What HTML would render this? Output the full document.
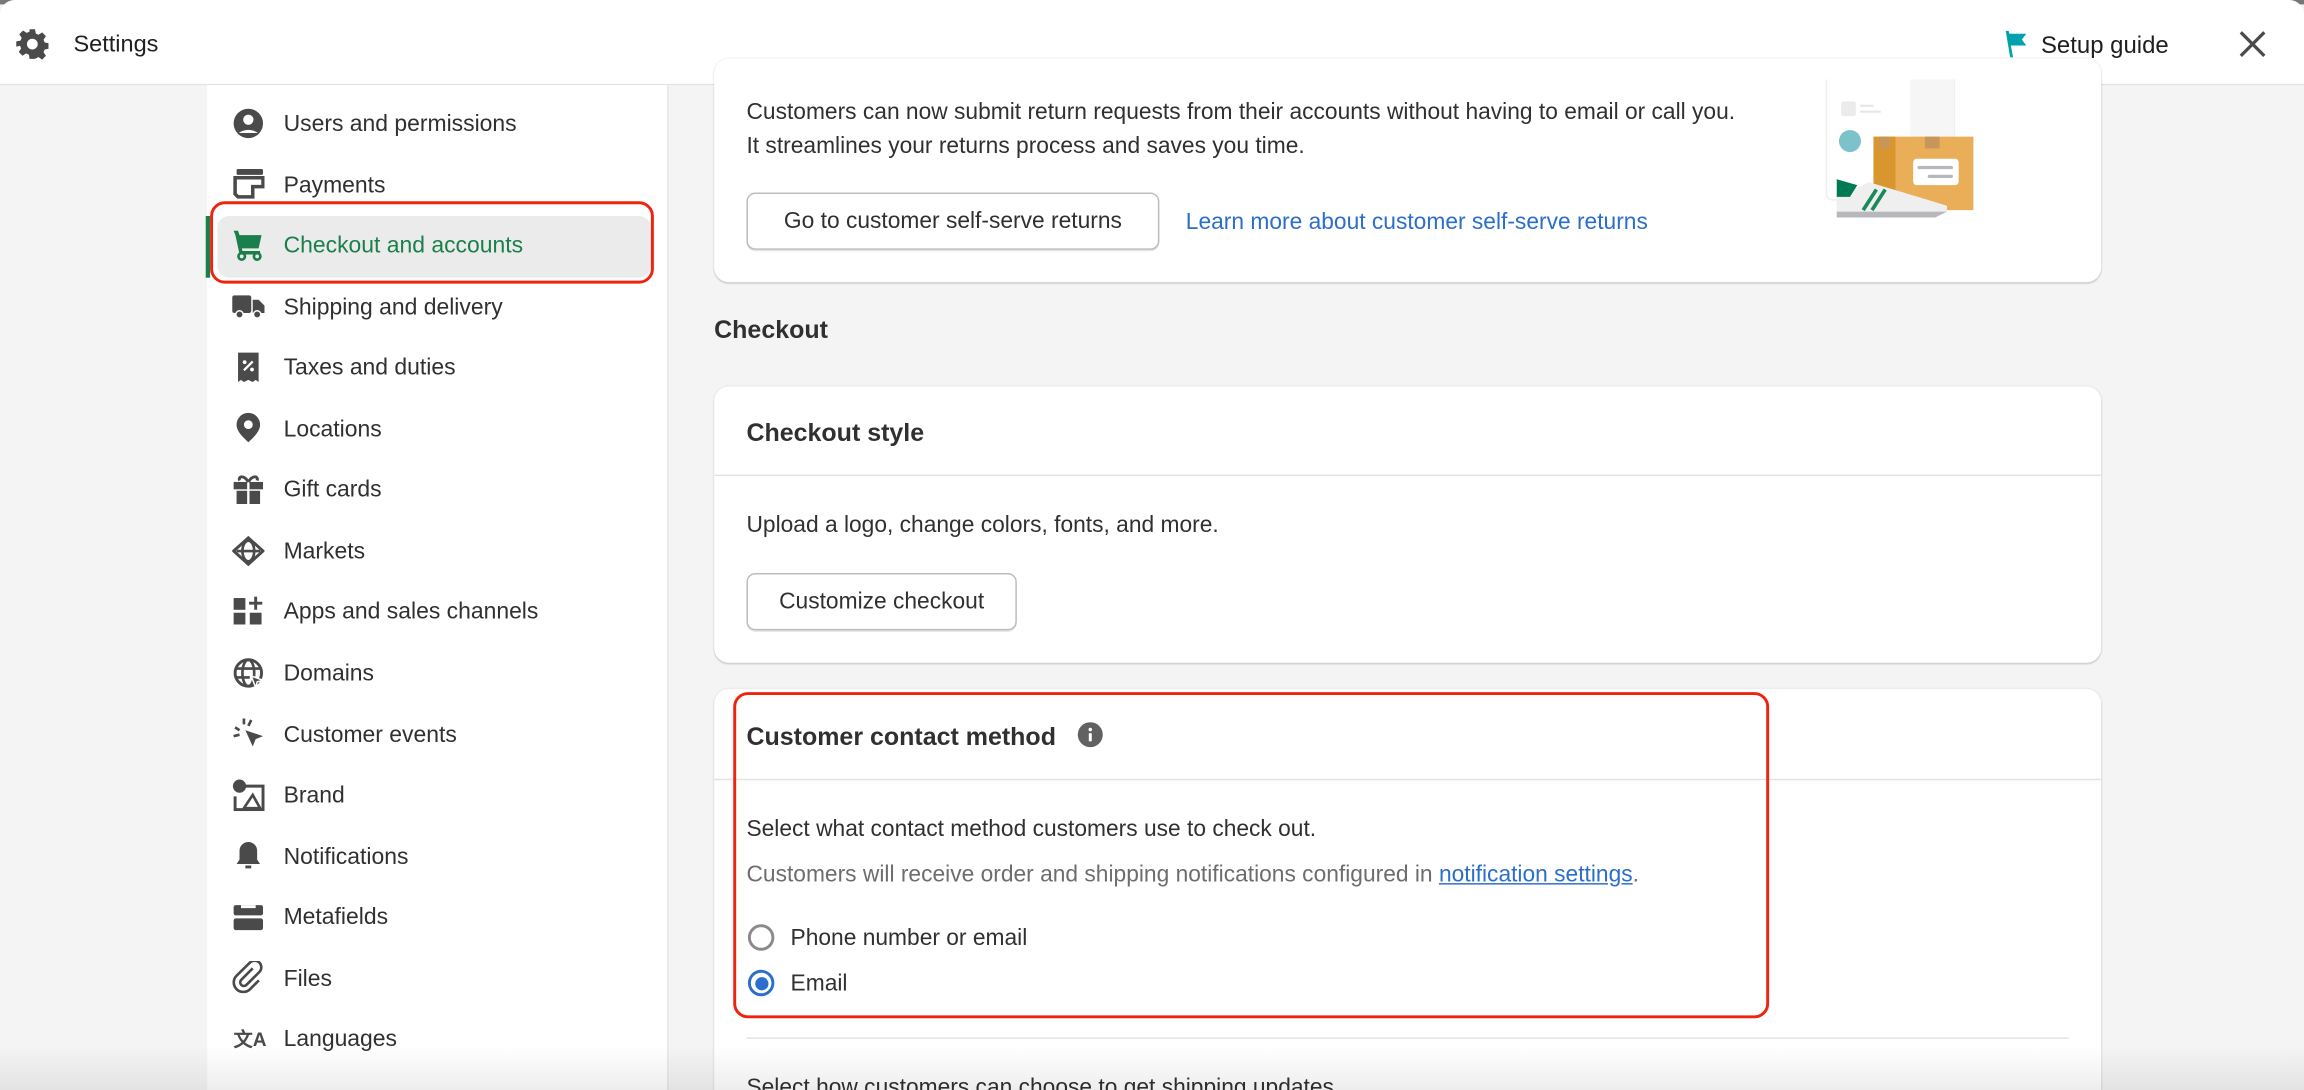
<!DOCTYPE html>
<html><head><meta charset="utf-8"><style>
*{box-sizing:border-box;margin:0;padding:0}
html,body{width:2304px;height:1090px;overflow:hidden;background:#f4f4f4}
#w{position:absolute;left:0;top:0;width:1568px;height:742px;transform:scale(1.469388);transform-origin:0 0;font-family:"Liberation Sans",sans-serif;color:#303030;background:#f4f4f4;overflow:hidden}
.a{position:absolute}
.hdr{left:0;top:0;width:1568px;height:58px;background:#fff;border-bottom:1.5px solid #e3e3e3;border-radius:10px 10px 0 0}
.side{left:141px;top:58px;width:314px;height:700px;background:#fff;border-right:1px solid #e6e6e6}
.it{position:absolute;left:193px;font-size:15.6px;color:#303030;line-height:18px;margin-top:1px}
.ic{position:absolute;left:158px;width:22px;height:22px}
.card{background:#fff;border-radius:10px;box-shadow:0 1px 1px rgba(0,0,0,.12),0 0 0 1px rgba(0,0,0,.03)}
.t{font-size:15.5px;line-height:18px;position:absolute;margin-top:1px}
.btn{position:absolute;border:1px solid #bcbcbc;border-radius:6px;background:#fff;font-size:15.5px;line-height:38px;text-align:center;color:#303030;box-shadow:0 1px 0 rgba(0,0,0,.1)}
.h2{font-size:17px;font-weight:bold;position:absolute;color:#303030;margin-top:1px}
</style></head><body><div id="w">
<div class="a" style="left:0;top:0;width:1568px;height:3px;background:#777"></div>
<div class="a hdr"></div>
<svg class="a" style="left:11px;top:19px" width="22" height="22" viewBox="0 0 24 24"><path fill="#4a4a4a" d="M10 1h4l.6 3.2 2 .9 2.7-1.8 2.8 2.8-1.8 2.7.9 2 3.2.6v4l-3.2.6-.9 2 1.8 2.7-2.8 2.8-2.7-1.8-2 .9L14 23h-4l-.6-3.2-2-.9-2.7 1.8-2.8-2.8 1.8-2.7-.9-2L0 14v-4l3.2-.6.9-2-1.8-2.7 2.8-2.8 2.7 1.8 2-.9zM12 8a4 4 0 100 8 4 4 0 000-8z"/></svg>
<div class="a" style="left:50px;top:22px;font-size:16px;color:#1f1f1f">Settings</div>
<svg class="a" style="left:1364px;top:20px" width="18" height="20" viewBox="0 0 18 20"><path fill="#00a3ad" d="M1 1h2l.5 2H15l-3 4 3 4H4.5L6 19H4z"/></svg>
<div class="a" style="left:1389px;top:22px;font-size:16.3px;color:#1f1f1f">Setup guide</div>
<svg class="a" style="left:1523px;top:20px" width="20" height="20" viewBox="0 0 20 20"><path d="M2 2l16 16M18 2L2 18" stroke="#4a4a4a" stroke-width="2.2"/></svg>

<div class="a side"></div>
<div class="a" style="left:148px;top:147px;width:295px;height:42px;background:#ebebeb;border-radius:8px"></div>
<div class="a" style="left:140px;top:147px;width:3px;height:42px;background:#1a7f4b"></div>
<div class="a" style="left:143px;top:137px;width:302px;height:56px;border:2.5px solid #f0230f;border-radius:10px"></div>

<svg class="ic" style="top:73px" viewBox="0 0 22 22"><circle cx="11" cy="11" r="10" fill="#4a4a4a"/><circle cx="11" cy="8.5" r="3.5" fill="#fff"/><path d="M4.5 17.5a8 5 0 0113 0" fill="#fff"/></svg>
<div class="it" style="top:75px">Users and permissions</div>
<svg class="ic" style="top:114px" viewBox="0 0 22 22"><rect x="3" y="1" width="18" height="4" rx="1" fill="#4a4a4a"/><path d="M2 7h19v6h-7v7H4l-2-2z" fill="none" stroke="#4a4a4a" stroke-width="2.4"/></svg>
<div class="it" style="top:117px">Payments</div>
<svg class="ic" style="top:156px" viewBox="0 0 22 22"><path d="M1 1h3l1 3h15l-2 9H6z" fill="#1a7f4b"/><path d="M3 2l3 14h13" fill="none" stroke="#1a7f4b" stroke-width="2.4"/><circle cx="6.5" cy="18.5" r="2.2" fill="none" stroke="#1a7f4b" stroke-width="1.8"/><circle cx="17" cy="18.5" r="2.2" fill="none" stroke="#1a7f4b" stroke-width="1.8"/></svg>
<div class="it" style="top:158px;color:#1a7f4b">Checkout and accounts</div>
<svg class="ic" style="top:197px" viewBox="0 0 22 22"><rect x="0" y="4" width="13" height="12" rx="1.5" fill="#4a4a4a"/><path d="M14 7h4l4 4v5h-8z" fill="#4a4a4a"/><circle cx="5" cy="17" r="2.5" fill="#4a4a4a" stroke="#fff"/><circle cx="17" cy="17" r="2.5" fill="#4a4a4a" stroke="#fff"/></svg>
<div class="it" style="top:200px">Shipping and delivery</div>
<svg class="ic" style="top:239px" viewBox="0 0 22 22"><path d="M4 1h14v20l-2-1.5-2 1.5-3-1.5L8 21l-2-1.5L4 21z" fill="#4a4a4a"/><path d="M8 13l6-6" stroke="#fff" stroke-width="1.6"/><circle cx="8.5" cy="7.5" r="1.3" fill="#fff"/><circle cx="13.5" cy="12.5" r="1.3" fill="#fff"/></svg>
<div class="it" style="top:241px">Taxes and duties</div>
<svg class="ic" style="top:280px" viewBox="0 0 22 22"><path d="M11 1a8 8 0 018 8c0 5-5 9-8 12-3-3-8-7-8-12a8 8 0 018-8z" fill="#4a4a4a"/><circle cx="11" cy="9" r="3" fill="#fff"/></svg>
<div class="it" style="top:283px">Locations</div>
<svg class="ic" style="top:322px" viewBox="0 0 22 22"><rect x="1" y="6" width="20" height="5" fill="#4a4a4a"/><rect x="3" y="12" width="16" height="9" fill="#4a4a4a"/><path d="M11 6v15" stroke="#fff" stroke-width="1.6"/><path d="M11 6C8 1 4 2 5 5M11 6c3-5 7-4 6-1" fill="none" stroke="#4a4a4a" stroke-width="2"/></svg>
<div class="it" style="top:324px">Gift cards</div>
<svg class="ic" style="top:364px" viewBox="0 0 22 22"><path d="M1 11L11 2l10 9-10 9z" fill="none" stroke="#4a4a4a" stroke-width="2"/><ellipse cx="11" cy="11" rx="4" ry="7" fill="none" stroke="#4a4a4a" stroke-width="1.8"/><path d="M3 11h16" stroke="#4a4a4a" stroke-width="1.8"/></svg>
<div class="it" style="top:366px">Markets</div>
<svg class="ic" style="top:405px" viewBox="0 0 22 22"><rect x="1" y="2" width="8" height="8" fill="#4a4a4a"/><rect x="1" y="12" width="8" height="8" fill="#4a4a4a"/><rect x="12" y="12" width="8" height="8" fill="#4a4a4a"/><path d="M16 1v9M11.5 5.5h9" stroke="#4a4a4a" stroke-width="2"/></svg>
<div class="it" style="top:407px">Apps and sales channels</div>
<svg class="ic" style="top:447px" viewBox="0 0 22 22"><circle cx="11" cy="11" r="9" fill="none" stroke="#4a4a4a" stroke-width="2"/><ellipse cx="11" cy="11" rx="4" ry="9" fill="none" stroke="#4a4a4a" stroke-width="1.8"/><path d="M2 8h18M2 14h10" stroke="#4a4a4a" stroke-width="1.8"/><path d="M13 13l8 3-4 1-1 4z" fill="#4a4a4a" stroke="#fff"/></svg>
<div class="it" style="top:449px">Domains</div>
<svg class="ic" style="top:488px" viewBox="0 0 22 22"><path d="M9 9l12 4-5 2-2 5z" fill="#4a4a4a"/><path d="M8 1v4M2 7l3 2M1 13l4-1M13 2l-2 4" stroke="#4a4a4a" stroke-width="1.8"/></svg>
<div class="it" style="top:491px">Customer events</div>
<svg class="ic" style="top:530px" viewBox="0 0 22 22"><path d="M8 5h13v16H2v-9" fill="none" stroke="#4a4a4a" stroke-width="2"/><circle cx="5" cy="5" r="4.5" fill="#4a4a4a"/><path d="M8 20l6-9 5 9z" fill="none" stroke="#4a4a4a" stroke-width="1.8"/></svg>
<div class="it" style="top:532px">Brand</div>
<svg class="ic" style="top:571px" viewBox="0 0 22 22"><path d="M11 2a6 6 0 016 6v6l2 3H3l2-3V8a6 6 0 016-6z" fill="#4a4a4a"/><path d="M9 19h4" stroke="#4a4a4a" stroke-width="2"/></svg>
<div class="it" style="top:574px">Notifications</div>
<svg class="ic" style="top:613px" viewBox="0 0 22 22"><rect x="1" y="3" width="20" height="7" rx="1.5" fill="#4a4a4a"/><rect x="1" y="12" width="20" height="8" rx="1.5" fill="#4a4a4a"/><path d="M6 3h10v2H6z" fill="#fff"/></svg>
<div class="it" style="top:615px">Metafields</div>
<svg class="ic" style="top:654px" viewBox="0 0 22 22"><path d="M14 5l-8 8a2.5 2.5 0 003.5 3.5l9-9a4.5 4.5 0 00-6.4-6.4L3 10a6.5 6.5 0 009.2 9.2l6-6" fill="none" stroke="#4a4a4a" stroke-width="1.8"/></svg>
<div class="it" style="top:657px">Files</div>
<div class="it" style="left:159px;top:698px;font-size:13px;font-weight:bold;color:#4a4a4a">文A</div>
<div class="it" style="top:698px">Languages</div>

<div class="a card" style="left:486px;top:40px;width:944px;height:152px"></div>
<div class="t" style="left:508px;top:67px;color:#303030">Customers can now submit return requests from their accounts without having to email or call you.</div>
<div class="t" style="left:508px;top:90px">It streamlines your returns process and saves you time.</div>
<div class="btn" style="left:508px;top:131px;width:281px;height:39px">Go to customer self-serve returns</div>
<div class="t" style="left:807px;top:142px;color:#2c6ecb">Learn more about customer self-serve returns</div>
<svg class="a" style="left:1236px;top:54px" width="112" height="98" viewBox="1236 54 112 98">
<rect x="1243" y="45" width="87" height="91" rx="4" fill="#fff" stroke="#eee"/><rect x="1300" y="45" width="30" height="91" fill="#f6f6f6"/>
<rect x="1253" y="69" width="10" height="10" rx="1.5" fill="#ebebeb"/><path d="M1266 72h9M1266 76h14" stroke="#e6e6e6" stroke-width="1.5"/>
<circle cx="1259" cy="96" r="7.5" fill="#7cc2cb"/>
<rect x="1275" y="93" width="68" height="50" fill="#e9ae57"/><rect x="1275" y="93" width="15" height="50" fill="#d9962f"/>
<rect x="1279" y="93" width="7" height="8" fill="#c6965a"/><rect x="1310" y="93" width="10" height="8" fill="#c6965a"/>
<rect x="1302" y="108" width="31" height="18" rx="2.5" fill="#fff"/><path d="M1306 114h22M1313 120h15" stroke="#b7b8bc" stroke-width="2.2" stroke-linecap="round"/>
<path d="M1250 133l18-7 4-2 40 12 13 4v4h-75z" fill="#efefef"/><path d="M1250 122l14 4-5 8h-9z" fill="#007a52"/>
<path d="M1268 143l9-14M1274 143l9-14" stroke="#1a8a5a" stroke-width="2.5"/><path d="M1250 144h75l-8 4h-67z" fill="#b7b8bc"/>
</svg>

<div class="a" style="left:486px;top:215px;font-size:17px;font-weight:bold;color:#303030">Checkout</div>

<div class="a card" style="left:486px;top:263px;width:944px;height:188px"></div>
<div class="h2" style="left:508px;top:284px">Checkout style</div>
<div class="a" style="left:486px;top:323px;width:944px;height:1px;background:#e3e3e3"></div>
<div class="t" style="left:508px;top:348px">Upload a logo, change colors, fonts, and more.</div>
<div class="btn" style="left:508px;top:390px;width:184px;height:39px">Customize checkout</div>

<div class="a card" style="left:486px;top:469px;width:944px;height:300px"></div>
<div class="h2" style="left:508px;top:491px">Customer contact method</div>
<svg class="a" style="left:733px;top:491px" width="18" height="18" viewBox="0 0 18 18"><circle cx="9" cy="9" r="8.5" fill="#616161"/><rect x="8" y="8" width="2" height="5.5" fill="#fff"/><circle cx="9" cy="5.5" r="1.2" fill="#fff"/></svg>
<div class="a" style="left:486px;top:530px;width:944px;height:1px;background:#e3e3e3"></div>
<div class="t" style="left:508px;top:555px">Select what contact method customers use to check out.</div>
<div class="t" style="left:508px;top:586px;color:#6d6d6d">Customers will receive order and shipping notifications configured in <span style="color:#2c6ecb;text-decoration:underline">notification settings</span>.</div>
<div class="a" style="left:509px;top:629px;width:18px;height:18px;border:2px solid #8a8a8a;border-radius:50%"></div>
<div class="t" style="left:538px;top:629px">Phone number or email</div>
<div class="a" style="left:509px;top:660px;width:18px;height:18px;border:2px solid #2c6ecb;border-radius:50%"></div>
<div class="a" style="left:513.5px;top:664.5px;width:9px;height:9px;background:#2c6ecb;border-radius:50%"></div>
<div class="t" style="left:538px;top:660px">Email</div>
<div class="a" style="left:508px;top:706px;width:900px;height:1px;background:#e3e3e3"></div>
<div class="t" style="left:508px;top:731px">Select how customers can choose to get shipping updates.</div>
<div class="a" style="left:499px;top:471px;width:705px;height:222px;border:2.5px solid #f0230f;border-radius:10px"></div>
<div class="a" style="left:0;top:712px;width:1568px;height:30px;background:linear-gradient(rgba(0,0,0,0),rgba(0,0,0,.07))"></div>
</div></body></html>
